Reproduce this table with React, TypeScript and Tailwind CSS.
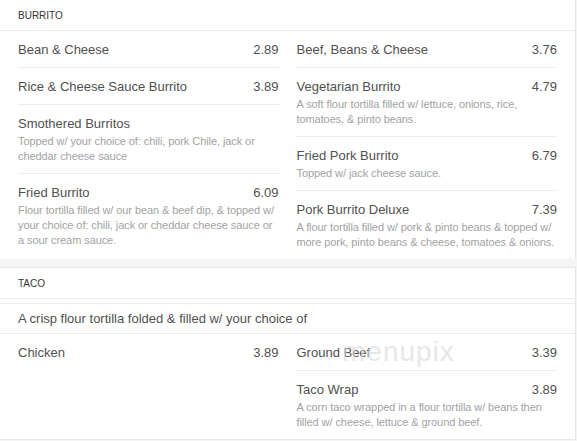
import React from "react";

type Item = { name: string; price: string; desc?: string };

const burritoLeft: Item[] = [
  { name: "Bean & Cheese", price: "2.89" },
  { name: "Rice & Cheese Sauce Burrito", price: "3.89" },
  {
    name: "Smothered Burritos",
    price: "",
    desc: "Topped w/ your choice of: chili, pork Chile, jack or cheddar cheese sauce",
  },
  {
    name: "Fried Burrito",
    price: "6.09",
    desc: "Flour tortilla filled w/ our bean & beef dip, & topped w/ your choice of: chili, jack or cheddar cheese sauce or a sour cream sauce.",
  },
];

const burritoRight: Item[] = [
  { name: "Beef, Beans & Cheese", price: "3.76" },
  {
    name: "Vegetarian Burrito",
    price: "4.79",
    desc: "A soft flour tortilla filled w/ lettuce, onions, rice, tomatoes, & pinto beans.",
  },
  { name: "Fried Pork Burrito", price: "6.79", desc: "Topped w/ jack cheese sauce." },
  {
    name: "Pork Burrito Deluxe",
    price: "7.39",
    desc: "A flour tortilla filled w/ pork & pinto beans & topped w/ more pork, pinto beans & cheese, tomatoes & onions.",
  },
];

const tacoLeft: Item[] = [{ name: "Chicken", price: "3.89" }];
const tacoRight: Item[] = [
  { name: "Ground Beef", price: "3.39" },
  {
    name: "Taco Wrap",
    price: "3.89",
    desc: "A corn taco wrapped in a flour tortilla w/ beans then filled w/ cheese, lettuce & ground beef.",
  },
];

function Row({ item, last }: { item: Item; last: boolean }) {
  return (
    <div className={"pt-[10px] pb-[9px] " + (last ? "" : "border-b border-[#ececec]")}>
      <div className="flex justify-between text-[13px] leading-[17px] text-[#505050]">
        <span>{item.name}</span>
        <span>{item.price}</span>
      </div>
      {item.desc && (
        <div className="mt-[2px] text-[11px] leading-[15px] tracking-[-0.08px] text-[#a2a2a2]">
          {item.desc}
        </div>
      )}
    </div>
  );
}

function Column({ items }: { items: Item[] }) {
  return (
    <div className="flex flex-col">
      {items.map((it, i) => (
        <Row key={it.name} item={it} last={i === items.length - 1} />
      ))}
    </div>
  );
}

function Header({ title }: { title: string }) {
  return (
    <div className="h-[31px] border-b border-[#ececec] px-[18px] flex items-center text-[10px] text-[#333]">
      {title}
    </div>
  );
}

export default function App() {
  return (
    <div
      className="w-[577px] h-[441px] overflow-hidden bg-[#f5f5f5] relative"
      style={{ fontFamily: '"Liberation Sans", Arial, sans-serif' }}
    >
      <div className="w-[576px] bg-white border-r border-[#e6e6e6]">
        <Header title="BURRITO" />
        <div className="grid grid-cols-2 gap-x-[18px] px-[18px]">
          <Column items={burritoLeft} />
          <Column items={burritoRight} />
        </div>
      </div>
      <div className="h-[8px]" />
      <div className="w-[576px] bg-white border-t border-b border-r border-[#e6e6e6]">
        <Header title="TACO" />
        <div className="mt-[4px] border-t border-b border-[#ececec] px-[18px] py-[6px] text-[13px] leading-[17px] text-[#505050]">
          A crisp flour tortilla folded &amp; filled w/ your choice of
        </div>
        <div className="grid grid-cols-2 gap-x-[18px] px-[18px]">
          <Column items={tacoLeft} />
          <Column items={tacoRight} />
        </div>
      </div>
      <div className="absolute left-[342px] top-[336px] text-[28px] leading-[32px] text-[#d8d8d8] opacity-60 tracking-[1px] pointer-events-none">
        menupix
      </div>
    </div>
  );
}
